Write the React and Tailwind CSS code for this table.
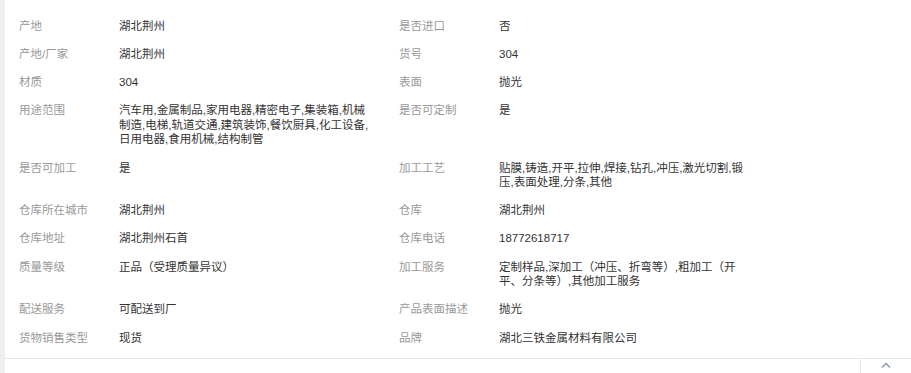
import React from 'react';

const rows = [
    [['产地', '湖北荆州'], ['是否进口', '否']],
    [['产地/厂家', '湖北荆州'], ['货号', '304']],
    [['材质', '304'], ['表面', '抛光']],
    [['用途范围', '汽车用,金属制品,家用电器,精密电子,集装箱,机械制造,电梯,轨道交通,建筑装饰,餐饮厨具,化工设备,日用电器,食用机械,结构制管'], ['是否可定制', '是']],
    [['是否可加工', '是'], ['加工工艺', '贴膜,铸造,开平,拉伸,焊接,钻孔,冲压,激光切割,锻压,表面处理,分条,其他']],
    [['仓库所在城市', '湖北荆州'], ['仓库', '湖北荆州']],
    [['仓库地址', '湖北荆州石首'], ['仓库电话', '18772618717']],
    [['质量等级', '正品（受理质量异议）'], ['加工服务', '定制样品,深加工（冲压、折弯等）,粗加工（开平、分条等）,其他加工服务']],
    [['配送服务', '可配送到厂'], ['产品表面描述', '抛光']],
    [['货物销售类型', '现货'], ['品牌', '湖北三铁金属材料有限公司']],
];

const Cell = ({ label, value }) => (
    <div className="flex w-[380px] shrink-0">
        <div className="w-[100px] shrink-0 text-[#999]">{label}</div>
        <div className="w-[252px] text-[#333] break-all">{value}</div>
    </div>
);

export default function App() {
    return (
        <div
            className="flex w-[911px] h-[373px] bg-white text-[11.5px] leading-[14.5px] overflow-hidden"
            style={{ fontFamily: '"Liberation Sans", "Noto Sans CJK SC", sans-serif' }}
        >
            {/* left gutter */}
            <div className="w-[5px] shrink-0 bg-[#efefef]" />

            <div className="flex-1 flex flex-col">
                {/* spec table */}
                <div className="pt-[12px] pb-[6px] pl-[14px]">
                    {rows.map((r, i) => (
                        <div key={i} className="flex py-[6.85px]">
                            <Cell label={r[0][0]} value={r[0][1]} />
                            <Cell label={r[1][0]} value={r[1][1]} />
                        </div>
                    ))}
                </div>

                {/* bottom bar */}
                <div className="flex-1 flex border-t border-[#e6e6e6]">
                    <div className="flex-1" />
                    <div className="w-[51px] border-l border-[#e6e6e6] flex justify-center pt-[3px]">
                        <svg width="10" height="6" viewBox="0 0 10 6" fill="none" stroke="#8796ab" strokeWidth="1.4">
                            <path d="M1 5.5 L5 1.5 L9 5.5" />
                        </svg>
                    </div>
                </div>
            </div>
        </div>
    );
}
